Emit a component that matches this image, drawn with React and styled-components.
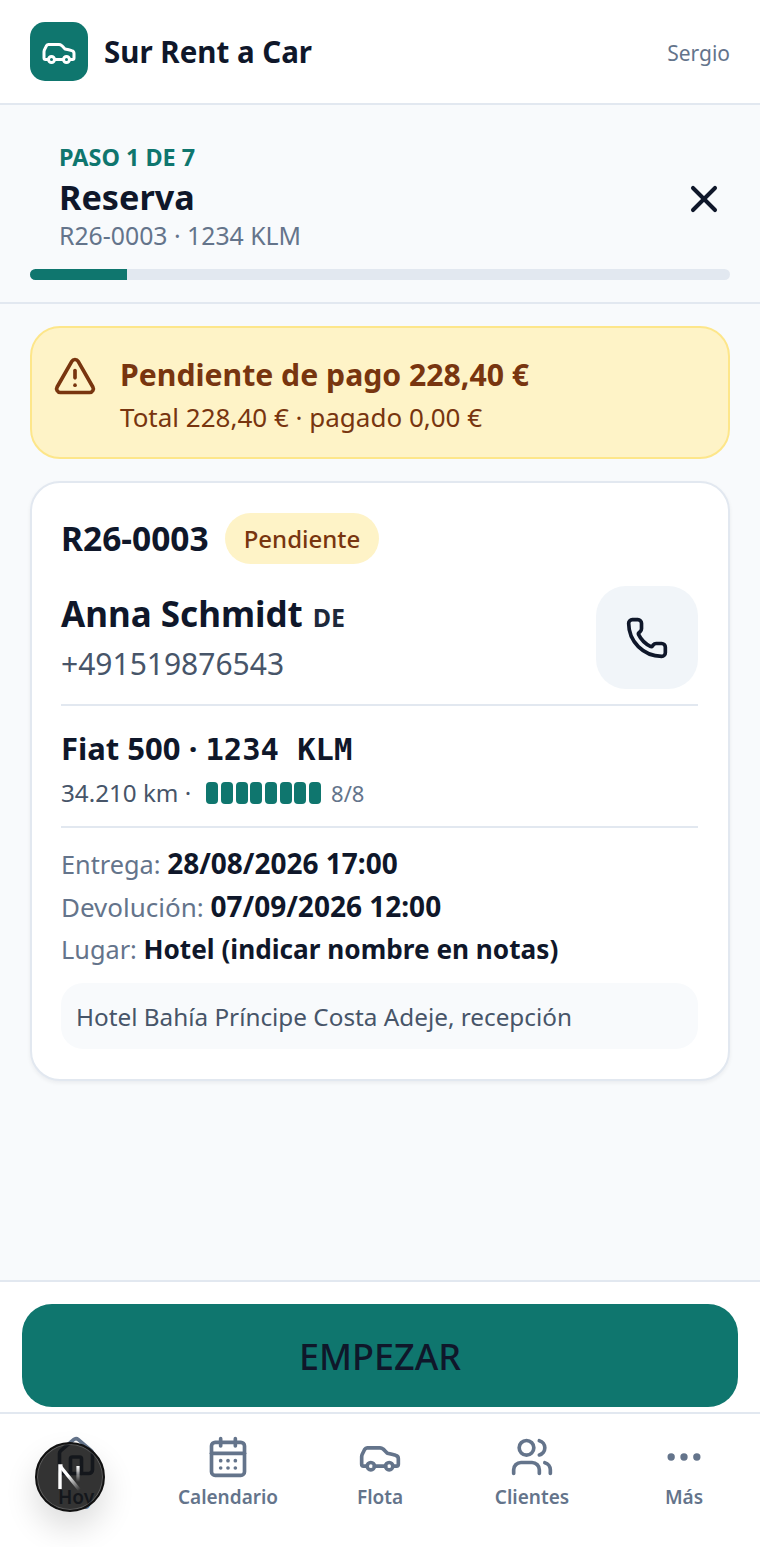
import React from "react";
import styled, { createGlobalStyle } from "styled-components";
import { Car, X, TriangleAlert, Phone, CalendarDays, Users, Ellipsis, House } from "lucide-react";

const Global = createGlobalStyle`
  html, body { margin: 0; padding: 0; background: #f8fafc; }
  body { font-family: "Noto Sans", sans-serif; color: #0f172a; }
  * { box-sizing: border-box; }
`;

const Page = styled.div`
  width: 760px;
  height: 1547px;
  display: flex;
  flex-direction: column;
  position: relative;
  overflow: hidden;
`;
const TopBar = styled.header`
  height: 105px;
  flex: none;
  background: #fff;
  border-bottom: 2px solid #e2e8f0;
  display: flex;
  align-items: center;
  justify-content: space-between;
  padding: 0 30px;
`;
const Brand = styled.div`
  display: flex;
  align-items: center;
  gap: 16px;
`;
const Logo = styled.div`
  width: 58px;
  height: 59px;
  border-radius: 15px;
  background: #0f766e;
  color: #fff;
  display: flex;
  align-items: center;
  justify-content: center;
`;
const BrandName = styled.div`
  font-size: 29.5px;
  font-weight: 700;
  line-height: 40px;
`;
const UserName = styled.div`
  font-size: 21px;
  padding-top: 2px;
  color: #64748b;
`;
const StepHead = styled.section`
  height: 199px;
  flex: none;
  border-bottom: 2px solid #e2e8f0;
  padding: 37px 30px 0;
`;
const StepRow = styled.div`
  display: flex;
  justify-content: space-between;
  align-items: center;
  padding: 0 4px 0 29px;
`;
const StepText = styled.div`
  display: flex;
  flex-direction: column;
`;
const StepLabel = styled.div`
  font-size: 23.4px;
  font-weight: 700;
  line-height: 30px;
  color: #0f766e;
`;
const StepTitle = styled.div`
  font-size: 34.2px;
  font-weight: 700;
  line-height: 43px;
  margin-top: 3px;
`;
const StepSub = styled.div`
  font-size: 24.8px;
  line-height: 34px;
  color: #64748b;
`;
const CloseWrap = styled.div`
  display: flex;
  margin-top: 3px;
`;
const Track = styled.div`
  height: 11px;
  border-radius: 6px;
  background: #e2e8f0;
  margin-top: 17px;
  overflow: hidden;
`;
const Fill = styled.div`
  height: 100%;
  background: #0f766e;
`;
const Main = styled.main`
  flex: 1;
  padding: 22px 30px 0;
  display: flex;
  flex-direction: column;
  gap: 22px;
`;
const Alert = styled.div`
  height: 133px;
  background: #fef3c7;
  border: 2px solid #fde68a;
  border-radius: 30px;
  display: flex;
  align-items: center;
  gap: 23px;
  padding: 0 21px;
  color: #78350f;
`;
const AlertIconWrap = styled.div`
  display: flex;
  margin-top: -34px;
`;
const AlertText = styled.div`
  margin-top: 4px;
`;
const AlertTitle = styled.div`
  font-size: 30.2px;
  font-weight: 700;
  line-height: 44px;
`;
const AlertSub = styled.div`
  font-size: 26px;
  line-height: 40px;
`;
const Card = styled.div`
  height: 600px;
  background: #fff;
  border: 2px solid #e2e8f0;
  border-radius: 30px;
  box-shadow: 0 2px 4px rgba(15, 23, 42, 0.06);
  padding: 29px 30px 29px 29px;
`;
const CodeRow = styled.div`
  display: flex;
  align-items: center;
  gap: 16px;
  height: 52px;
`;
const Code = styled.div`
  font-size: 33.5px;
  font-weight: 700;
`;
const Badge = styled.div`
  height: 51px;
  padding: 0 19px;
  border-radius: 26px;
  background: #fef3c7;
  color: #78350f;
  font-size: 24px;
  font-weight: 500;
  display: flex;
  align-items: center;
`;
const PersonRow = styled.div`
  display: flex;
  justify-content: space-between;
  align-items: flex-start;
  padding: 22px 0 15px;
  border-bottom: 2px solid #e2e8f0;
`;
const PersonName = styled.div`
  font-size: 35px;
  font-weight: 700;
  line-height: 46px;
  margin-top: 5px;
`;
const Country = styled.span`
  font-size: 25px;
  font-weight: 700;
  color: #1e293b;
  margin-left: 10px;
`;
const PersonPhone = styled.div`
  font-size: 30px;
  line-height: 40px;
  margin-top: 4px;
  color: #475569;
`;
const CallButton = styled.div`
  width: 102px;
  height: 103px;
  border-radius: 30px;
  background: #f1f5f9;
  display: flex;
  align-items: center;
  justify-content: center;
`;
const VehicleBlock = styled.div`
  height: 122px;
  padding-top: 20px;
  border-bottom: 2px solid #e2e8f0;
`;
const VehicleName = styled.div`
  font-size: 31px;
  font-weight: 700;
  line-height: 44px;
`;
const Mono = styled.span`
  font-family: "DejaVu Sans Mono", monospace;
  font-size: 30.5px;
`;
const VehicleMeta = styled.div`
  display: flex;
  align-items: center;
  font-size: 24.2px;
  line-height: 42px;
  color: #475569;
`;
const Fuel = styled.div`
  display: flex;
  gap: 2.7px;
  margin: 0 10px 0 15px;
`;
const Cell = styled.div`
  width: 12px;
  height: 22px;
  border-radius: 4px;
  background: #0f766e;
`;
const FuelCount = styled.span`
  font-size: 22px;
  color: #64748b;
`;
const Details = styled.div`
  padding-top: 14px;
`;
const DetailLine = styled.div`
  font-size: ${(p) => p.$size}px;
  line-height: 42px;
  color: #64748b;
`;
const Strong = styled.strong`
  color: #0f172a;
  font-weight: 700;
  font-size: ${(p) => p.$size}px;
`;
const Note = styled.div`
  height: 66px;
  margin-top: 13px;
  padding: 0 15px;
  border-radius: 22px;
  background: #f8fafc;
  font-size: 24.3px;
  color: #475569;
  display: flex;
  align-items: center;
`;
const ActionBar = styled.div`
  height: 134px;
  flex: none;
  margin-top: auto;
  background: #fff;
  border-top: 2px solid #e2e8f0;
  border-bottom: 2px solid #e2e8f0;
  padding: 22px 22px 0;
`;
const Primary = styled.div`
  height: 103px;
  padding-top: 2px;
  border-radius: 30px;
  background: #0f766e;
  color: #0f172a;
  font-size: 36px;
  font-weight: 500;
  display: flex;
  align-items: center;
  justify-content: center;
`;
const Nav = styled.nav`
  height: 133px;
  flex: none;
  background: #fff;
  display: grid;
  grid-template-columns: repeat(5, 1fr);
`;
const NavItem = styled.div`
  display: flex;
  flex-direction: column;
  align-items: center;
  padding-top: 21px;
  gap: 2px;
  color: #64748b;
  font-size: 19px;
  font-weight: 600;
  line-height: 32px;
`;
const DevBadge = styled.div`
  position: absolute;
  left: 35px;
  top: 1442px;
  width: 70px;
  height: 70px;
  border-radius: 50%;
  background: rgba(0, 0, 0, 0.8);
  border: 2px solid #111;
  box-shadow: inset 0 0 0 1px rgba(255, 255, 255, 0.2), 0 16px 32px rgba(0, 0, 0, 0.14);
  display: flex;
  align-items: center;
  justify-content: center;
`;

export default function App() {
  return (
    <Page>
      <Global />
      <TopBar>
        <Brand>
          <Logo><Car size={36} strokeWidth={2} /></Logo>
          <BrandName>Sur Rent a Car</BrandName>
        </Brand>
        <UserName>Sergio</UserName>
      </TopBar>
      <StepHead>
        <StepRow>
          <StepText>
            <StepLabel>PASO 1 DE 7</StepLabel>
            <StepTitle>Reserva</StepTitle>
            <StepSub>R26-0003 · 1234 KLM</StepSub>
          </StepText>
          <CloseWrap><X size={44} strokeWidth={2.2} /></CloseWrap>
        </StepRow>
        <Track><Fill style={{ width: "13.9%" }} /></Track>
      </StepHead>
      <Main>
        <Alert>
          <AlertIconWrap><TriangleAlert size={44} strokeWidth={2} /></AlertIconWrap>
          <AlertText>
            <AlertTitle>Pendiente de pago 228,40 €</AlertTitle>
            <AlertSub>Total 228,40 € · pagado 0,00 €</AlertSub>
          </AlertText>
        </Alert>
        <Card>
          <CodeRow><Code>R26-0003</Code><Badge>Pendiente</Badge></CodeRow>
          <PersonRow>
            <div>
              <PersonName>Anna Schmidt<Country>DE</Country></PersonName>
              <PersonPhone>+491519876543</PersonPhone>
            </div>
            <CallButton><Phone size={44} strokeWidth={2} /></CallButton>
          </PersonRow>
          <VehicleBlock>
            <VehicleName>Fiat 500 · <Mono>1234 KLM</Mono></VehicleName>
            <VehicleMeta>
              34.210 km ·
              <Fuel>{Array.from({ length: 8 }).map((_, i) => <Cell key={i} />)}</Fuel>
              <FuelCount>8/8</FuelCount>
            </VehicleMeta>
          </VehicleBlock>
          <Details>
            <DetailLine $size={25.3}>Entrega: <Strong $size={28}>28/08/2026 17:00</Strong></DetailLine>
            <DetailLine $size={26}>Devolución: <Strong $size={28}>07/09/2026 12:00</Strong></DetailLine>
            <DetailLine $size={25.3}>Lugar: <Strong $size={26.2}>Hotel (indicar nombre en notas)</Strong></DetailLine>
          </Details>
          <Note>Hotel Bahía Príncipe Costa Adeje, recepción</Note>
        </Card>
      </Main>
      <ActionBar><Primary>EMPEZAR</Primary></ActionBar>
      <Nav>
        <NavItem><House size={44} strokeWidth={2} />Hoy</NavItem>
        <NavItem><CalendarDays size={44} strokeWidth={2} />Calendario</NavItem>
        <NavItem><Car size={44} strokeWidth={2} />Flota</NavItem>
        <NavItem><Users size={44} strokeWidth={2} />Clientes</NavItem>
        <NavItem><Ellipsis size={44} strokeWidth={2} />Más</NavItem>
      </Nav>
      <DevBadge>
        <svg width="30" height="30" viewBox="0 0 30 30" fill="none">
          <defs>
            <linearGradient id="nDiag" x1="6" y1="4" x2="26" y2="27" gradientUnits="userSpaceOnUse">
              <stop offset="0.4" stopColor="#fff" />
              <stop offset="1" stopColor="#fff" stopOpacity="0" />
            </linearGradient>
            <linearGradient id="nStem" x1="22" y1="4" x2="22" y2="20" gradientUnits="userSpaceOnUse">
              <stop offset="0" stopColor="#fff" />
              <stop offset="1" stopColor="#fff" stopOpacity="0" />
            </linearGradient>
          </defs>
          <path d="M5 27V4h2.5" stroke="#fff" strokeWidth="3.4" />
          <path d="M5.5 4.5l19 23.5" stroke="url(#nDiag)" strokeWidth="3.4" />
          <path d="M23 4v18" stroke="url(#nStem)" strokeWidth="3.2" />
        </svg>
      </DevBadge>
    </Page>
  );
}
